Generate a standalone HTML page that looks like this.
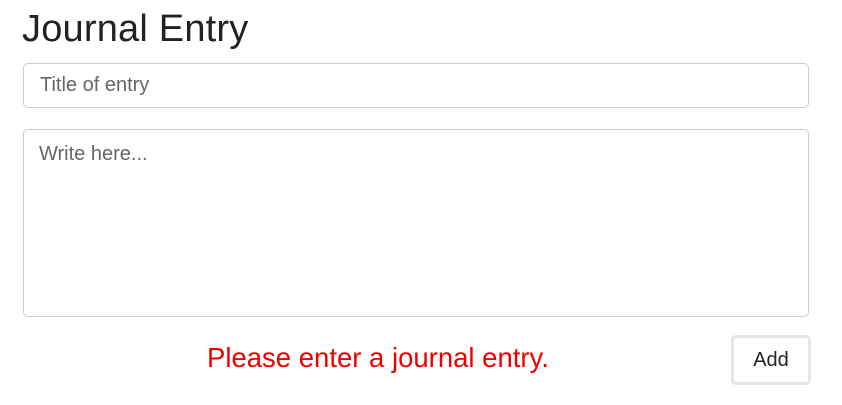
<!DOCTYPE html>
<html><head><style>
body{margin:0;background:#fff;width:842px;height:405px;position:relative;font-family:"Liberation Sans",sans-serif;overflow:hidden}
h1{position:absolute;left:22px;top:8px;margin:0;font-weight:normal;font-size:38px;color:#222;letter-spacing:0.2px}
.box{position:absolute;left:23px;width:786px;border:1px solid #ccc;border-radius:5px;box-sizing:border-box;color:#666;font-size:20px}
.in{top:63px;height:45px;padding:10px 16px}
.ta{top:129px;height:188px;padding:13px 15px}
.err{position:absolute;left:207px;top:342px;color:#e00;font-size:27.5px}
.btn{position:absolute;left:731px;top:335px;width:80px;height:50px;box-sizing:border-box;border:3px solid #e6e6e6;border-radius:5px;font-size:20px;color:#222;text-align:center;line-height:44px;background:#fff}
</style></head><body>
<h1>Journal Entry</h1>
<div class="box in">Title of entry</div>
<div class="box ta">Write here...</div>
<div class="err">Please enter a journal entry.</div>
<div class="btn">Add</div>
</body></html>
